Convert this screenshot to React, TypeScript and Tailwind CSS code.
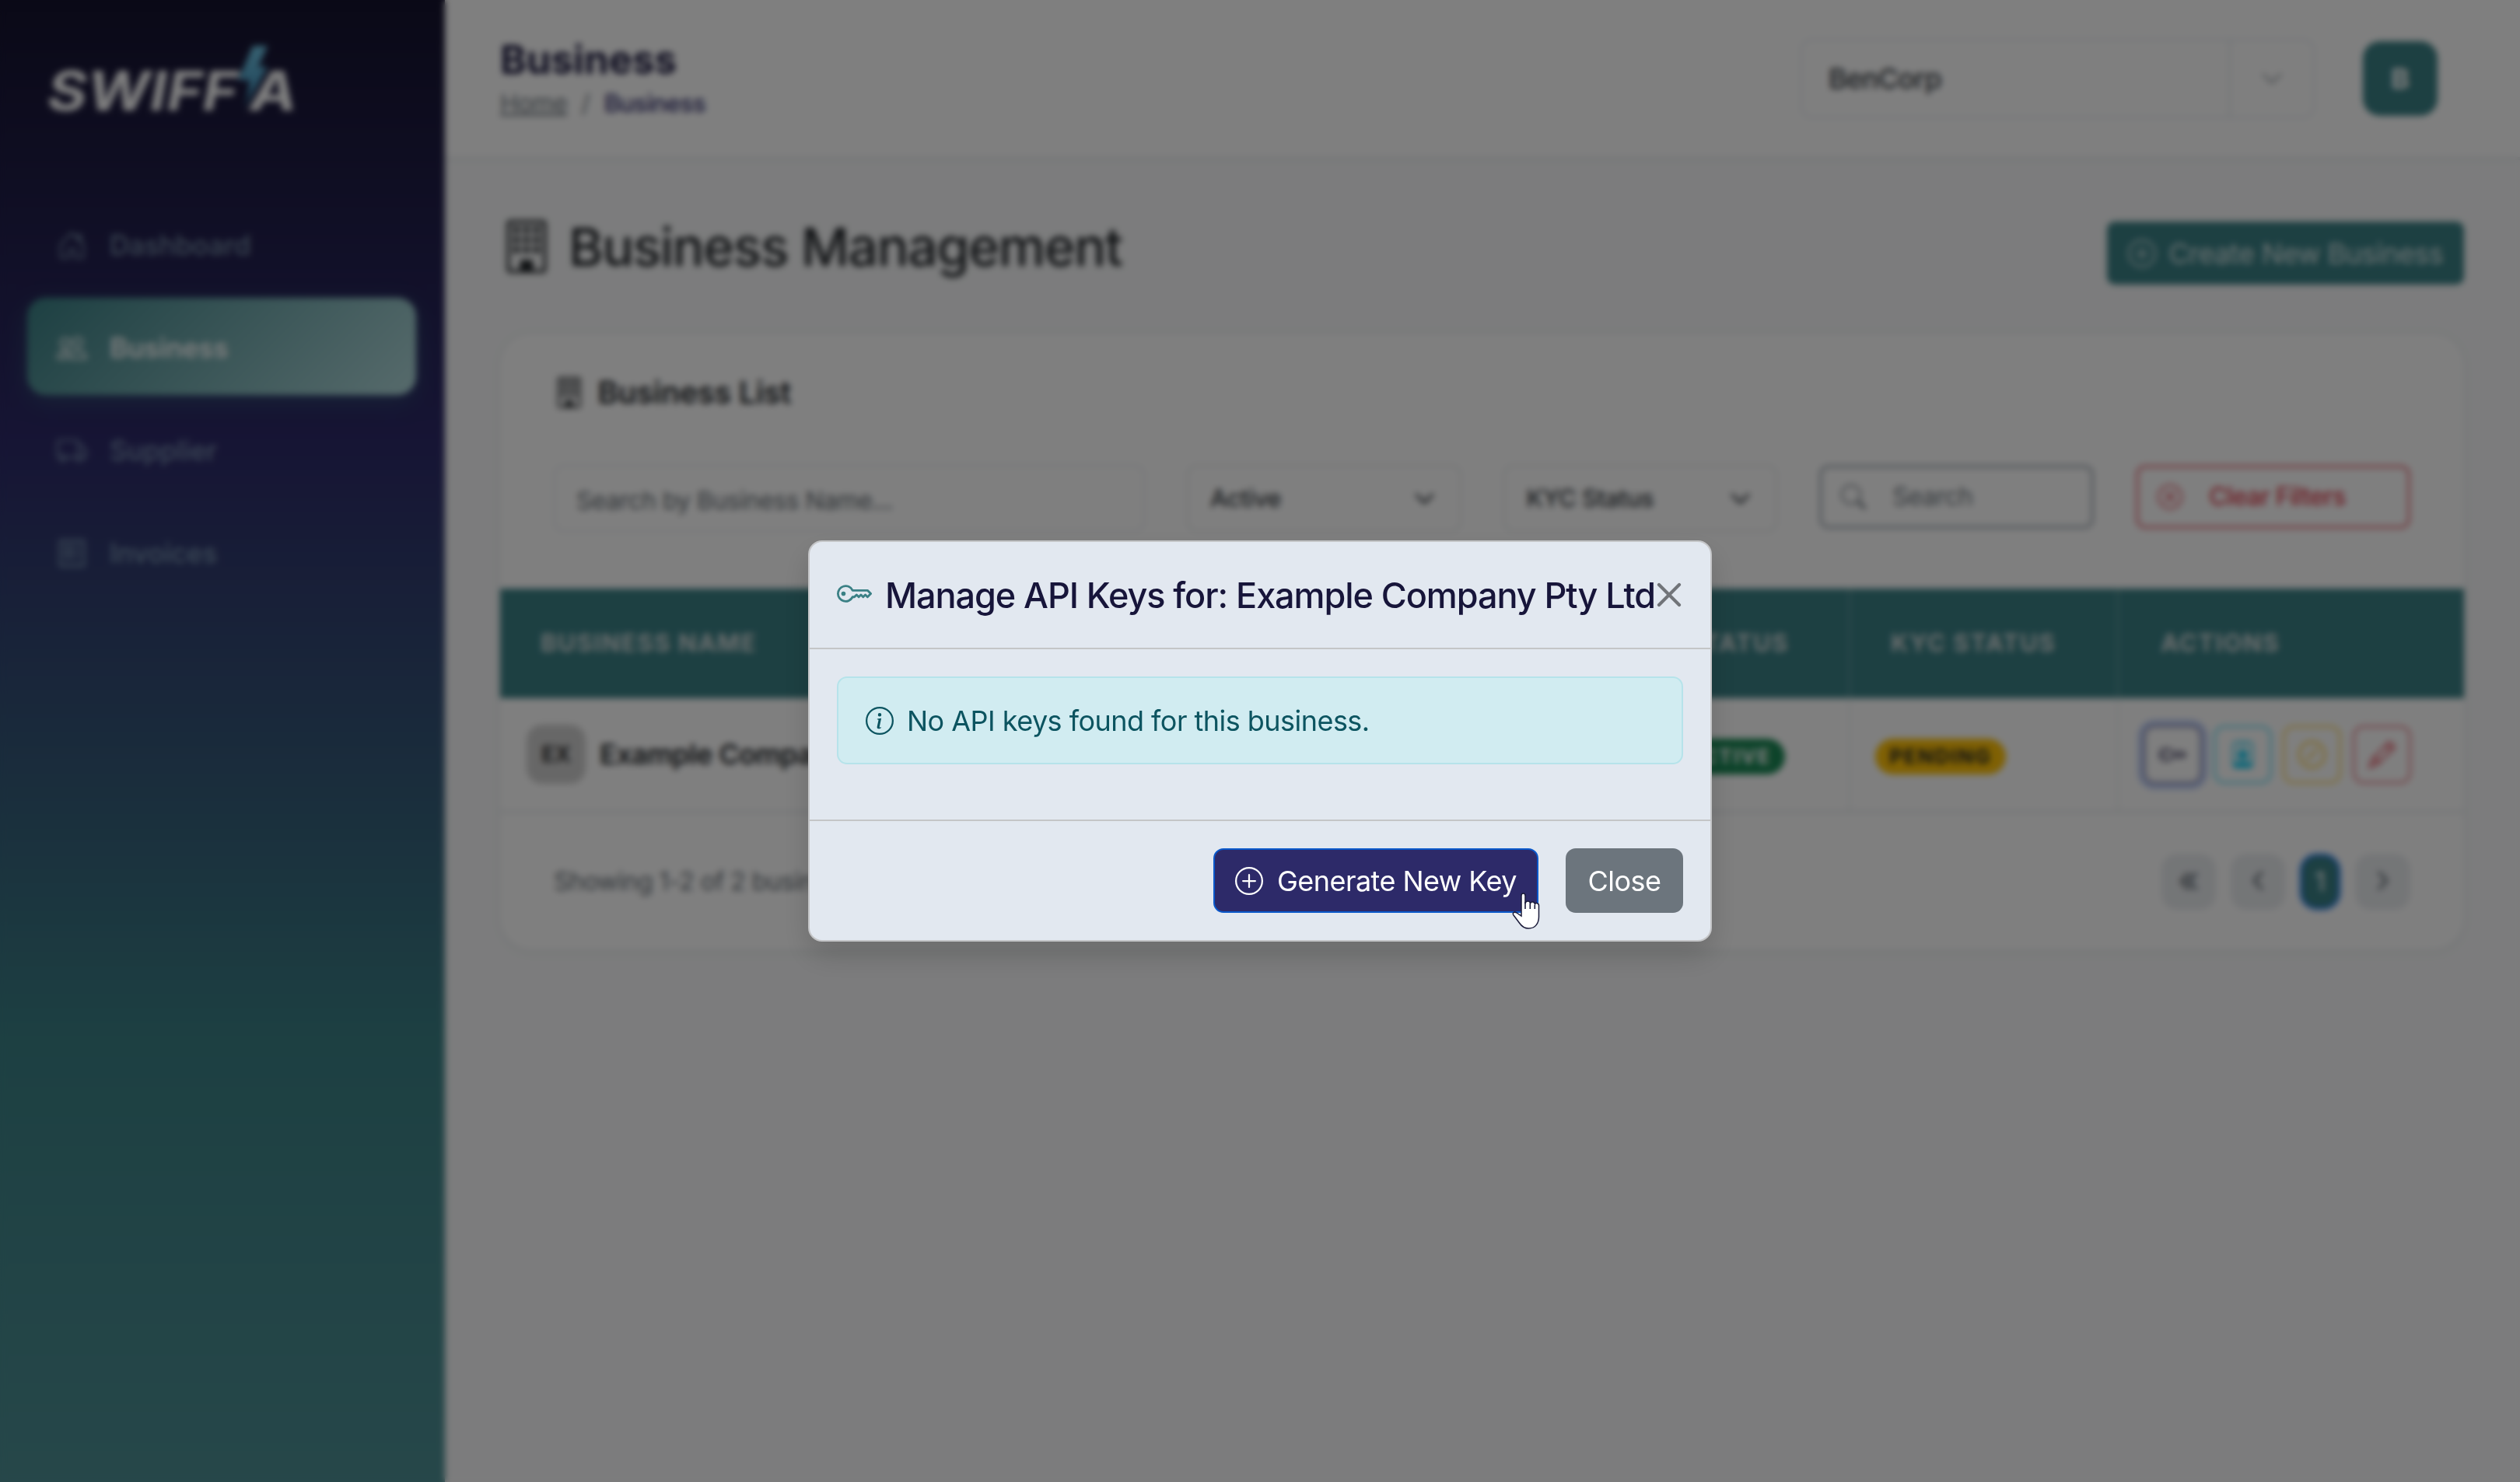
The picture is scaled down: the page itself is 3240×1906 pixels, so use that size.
import type { ReactNode } from "react";
import {
  BsBuilding,
  BsChevronDown,
  BsHouseDoor,
  BsInfoCircle,
  BsKey,
  BsPencil,
  BsPeople,
  BsPersonBadge,
  BsPlusCircle,
  BsReceipt,
  BsSearch,
  BsSlashCircle,
  BsTruck,
  BsXCircle,
} from "react-icons/bs";

function Logo() {
  return (
    <svg className="h-[100px] w-[340px] overflow-visible" viewBox="0 0 340 100" fill="none">
      <defs>
        <linearGradient id="bolt" x1="0" y1="0" x2="0" y2="1">
          <stop offset="0" stopColor="#6fc4e4" />
          <stop offset="0.6" stopColor="#4f9fc6" />
          <stop offset="1" stopColor="#1b3d5c" />
        </linearGradient>
      </defs>
      <text x="3" y="86" fontFamily="Inter" fontWeight="700" fontStyle="italic" fontSize="70" fill="#fff" textLength="245" lengthAdjust="spacingAndGlyphs">SWIFF</text>
      <text x="263" y="86" fontFamily="Inter" fontWeight="700" fontStyle="italic" fontSize="70" fill="#fff" textLength="61" lengthAdjust="spacingAndGlyphs">A</text>
      <path d="M267 3h19l-12 27h12L256 85l7-38h-15z" fill="url(#bolt)" />
    </svg>
  );
}

function NavItem({ icon, label, active }: { icon: ReactNode; label: string; active?: boolean }) {
  return (
    <a
      className={
        "flex h-[125px] items-center gap-[29px] rounded-[24px] pt-[3px] pl-[38px] text-[34.8px] leading-none " +
        (active
          ? "bg-[linear-gradient(135deg,#3a8085,#aed6d8)] font-semibold text-white shadow-[0_8px_30px_rgba(58,128,133,0.35)]"
          : "font-medium text-[#a8cdd8]/65")
      }
    >
      <span className="text-[39px]">{icon}</span>
      {label}
    </a>
  );
}

function Sidebar() {
  return (
    <aside className="flex h-full w-[572px] shrink-0 flex-col bg-[linear-gradient(180deg,#15132e_0%,#2d2a69_30%,#3a8085_70%,#4d8f94_100%)]">
      <div className="h-[251px] pt-[56px] pl-[58px]">
        <Logo />
      </div>
      <nav className="flex flex-col gap-[7px] pr-[37px] pl-[35px]">
        <NavItem icon={<BsHouseDoor />} label="Dashboard" />
        <NavItem icon={<BsPeople />} label="Business" active />
        <NavItem icon={<BsTruck />} label="Supplier" />
        <NavItem icon={<BsReceipt />} label="Invoices" />
      </nav>
    </aside>
  );
}

function TopBar() {
  return (
    <header className="flex h-[206px] shrink-0 items-center justify-between border-b-4 border-[#e9ecef] bg-white pr-[106px] pl-[71px]">
      <div className="flex flex-col pt-[4px]">
        <h2 className="text-[51px] leading-[60px] font-bold text-[#1d1b40]">Business</h2>
        <div className="flex gap-[18px] text-[31.5px] leading-[52px] text-[#6c757d]">
          <span className="tracking-[-0.5px] underline">Home</span>
          <span>/</span>
          <span className="font-medium tracking-[-0.7px] text-[#2d2a69]">Business</span>
        </div>
      </div>
      <div className="flex items-center gap-[62px]">
        <div className="flex h-[102px] w-[661px] items-center rounded-[14px] border-2 border-[#e2e8f0]">
          <span className="flex-1 pl-[34px] text-[36px] font-medium tracking-[-0.9px] text-[#343a40]">BenCorp</span>
          <span className="flex h-full w-[108px] items-center justify-center border-l-2 border-[#dee2e6] text-[30px] text-[#6c757d]">
            <BsChevronDown />
          </span>
        </div>
        <div className="flex size-[96px] items-center justify-center rounded-[22px] bg-[#3a8085] text-[36px] font-bold text-white">B</div>
      </div>
    </header>
  );
}

function Select({ label }: { label: string }) {
  return (
    <div className="col-span-2 flex h-[86px] items-center justify-between rounded-[12px] border-2 border-[#e2e5e8] pr-[32px] pl-[28px] text-[31.5px] font-medium tracking-[-0.6px] text-[#343a40]">
      {label}
      <BsChevronDown className="text-[27px]" strokeWidth={1} />
    </div>
  );
}

function Filters() {
  return (
    <div className="mt-[61px] grid grid-cols-12 gap-[54px]">
      <div className="col-span-4 flex h-[86px] items-center rounded-[12px] border-2 border-[#e6eaee] px-[27px] pt-[6px] text-[31.5px] tracking-[-0.35px] text-[#5f686f]">
        Search by Business Name...
      </div>
      <Select label="Active" />
      <Select label="KYC Status" />
      <button className="col-span-2 flex h-[82px] items-center gap-[34px] rounded-[12px] border-4 border-[#adb5bd] px-[24px] text-[32px] tracking-[-0.5px] text-[#6c757d]">
        <BsSearch />
        Search
      </button>
      <button className="col-span-2 flex h-[82px] items-center gap-[34px] rounded-[12px] border-4 border-[#dc3545]/60 px-[24px] text-[32px] font-medium tracking-[-0.65px] text-[#dc3545]">
        <BsXCircle />
        Clear Filters
      </button>
    </div>
  );
}

const columns = "grid grid-cols-[1473px_263px_345px_1fr]";

function HeadCell({ children, last }: { children?: ReactNode; last?: boolean }) {
  return (
    <div className={"flex items-center " + (last ? "pl-[54px]" : "border-r-2 border-white/25 pl-[52px]")}>{children}</div>
  );
}

function ActionButton({ icon, tone }: { icon: ReactNode; tone: string }) {
  return (
    <button className={"flex size-[75px] items-center justify-center rounded-[14px] border-[3px] text-[35px] " + tone}>
      {icon}
    </button>
  );
}

function Table() {
  return (
    <div>
      <div className={columns + " h-[141px] bg-[#3a8085] text-[31px] font-bold tracking-[1.6px] text-[#d5dcdd]"}>
        <HeadCell>BUSINESS NAME</HeadCell>
        <HeadCell>STATUS</HeadCell>
        <HeadCell>KYC STATUS</HeadCell>
        <HeadCell last>ACTIONS</HeadCell>
      </div>
      <div className={columns + " h-[148px] border-b-4 border-[#eceff1]"}>
        <div className="flex items-center gap-[18px] border-r-2 border-[#e9ecef] pl-[34px]">
          <div className="flex size-[76px] items-center justify-center rounded-[20px] bg-[#cfcfcf] text-[28px] font-bold text-[#333]">EX</div>
          <span className="text-[36px] font-semibold tracking-[-0.55px] text-[#212529]">Example Company Pty Ltd</span>
        </div>
        <div className="flex items-center border-r-2 border-[#e9ecef] pt-[5px] pl-[34px]">
          <span className="flex h-[46px] items-center rounded-full bg-[#198754] px-[18px] text-[26px] font-bold tracking-[2px] text-white">ACTIVE</span>
        </div>
        <div className="flex items-center border-r-2 border-[#e9ecef] pt-[5px] pl-[32px]">
          <span className="flex h-[46px] items-center rounded-full bg-[#ffc107] px-[18px] text-[26px] font-bold tracking-[2px] text-[#212529]">PENDING</span>
        </div>
        <div className="flex items-center gap-[14.6px] pl-[32px]">
          <ActionButton icon={<BsKey />} tone="border-[#2d2a69]/50 text-[#2d2a50] shadow-[0_0_0_7px_rgba(90,130,230,0.42)]" />
          <ActionButton icon={<BsPersonBadge />} tone="border-[#0dcaf0]/60 text-[#0dcaf0]" />
          <ActionButton icon={<BsSlashCircle />} tone="border-[#ffc107]/60 text-[#ffc107]" />
          <ActionButton icon={<BsPencil />} tone="border-[#dc3545]/60 text-[#dc3545]" />
        </div>
      </div>
    </div>
  );
}

function Pager() {
  return (
    <div className="flex gap-[19px] leading-none text-[#6c757d]">
      <span className="flex h-[72px] w-[70px] items-center justify-center rounded-[20px] bg-[#e9ecef] pb-[8px] text-[46px] font-medium">«</span>
      <span className="flex h-[72px] w-[70px] items-center justify-center rounded-[20px] bg-[#e9ecef] pb-[8px] text-[50px]">‹</span>
      <span className="flex h-[72px] w-[52px] items-center justify-center rounded-[22px] border-[3px] border-[#0d6efd] bg-[#3a8085] text-[34px] text-white">1</span>
      <span className="flex h-[72px] w-[71px] items-center justify-center rounded-[20px] bg-[#e9ecef] pb-[8px] text-[50px]">›</span>
    </div>
  );
}

function BusinessPage() {
  return (
    <main className="flex flex-1 flex-col pr-[72px] pl-[71px]">
      <div className="mt-[72px] flex h-[90px] items-center justify-between">
        <h1 className="mt-[-12px] flex items-center gap-[20px] text-[68px] leading-none font-medium tracking-[-1.4px] text-[#212529]">
          <BsBuilding />
          Business Management
        </h1>
        <button className="mt-[5px] flex h-[81px] items-center gap-[16px] rounded-[10px] bg-[#3a8085] px-[27px] text-[36px] tracking-[-0.55px] text-[#dbe8e9]">
          <BsPlusCircle />
          Create New Business
        </button>
      </div>
      <section className="mt-[61px] h-[792px] overflow-hidden rounded-[40px] bg-white shadow-[0_0_0_3px_#eceff1,0_6px_12px_rgba(0,0,0,0.03)]">
        <div className="h-[328px] pt-[44px] pr-[69px] pl-[69px]">
          <h3 className="flex items-center gap-[17px] text-[39.5px] leading-[64px] font-semibold tracking-[-0.2px] text-[#212529]">
            <BsBuilding />
            Business List
          </h3>
          <Filters />
        </div>
        <Table />
        <div className="flex items-center justify-between pt-[52px] pr-[69px] pl-[69px]">
          <span className="text-[32px] tracking-[-0.5px] text-[#636c74]">Showing 1-2 of 2 businesses</span>
          <Pager />
        </div>
      </section>
    </main>
  );
}

function HandCursor() {
  return (
    <svg className="absolute top-[55px] right-[-4px] h-[48px] w-[36px]" viewBox="0 0 36 48">
      <path
        d="M12 30V4c0-4 5-4 5 0v10c1-4 6-4 6.500 0c1-3 5.500-2.500 6 .8c1-2 5-1.500 5 1.700V31c0 9-5 15-13 15c-6 0-9-2.500-12-7L2 29c-2-3 1-5 4-3z"
        fill="#fff"
        stroke="#1b1b3a"
        strokeWidth="1.5"
      />
      <path d="M17 12v9M23.300 14v7M29.300 16v5" stroke="#1b1b3a" strokeWidth="1.600" />
    </svg>
  );
}

function ApiKeysDialog() {
  return (
    <div className="w-[1162px] rounded-[18px] border-2 border-[#c4c5c7] bg-[#e2e8f0] shadow-[0_18px_36px_rgba(0,0,0,0.15)]">
      <div className="flex h-[138px] items-center justify-between border-b-2 border-[#c4c5c7] pr-[37px] pl-[35px]">
        <h5 className="flex items-center gap-[17px] text-[45px] leading-none font-medium tracking-[-1.07px] whitespace-nowrap text-[#17153a]">
          <BsKey className="mt-[-3px] text-[#3a8085]" />
          Manage API Keys for: Example Company Pty Ltd
        </h5>
        <svg className="h-[32px] w-[32px] shrink-0" viewBox="0 0 32 32" stroke="#717479" strokeWidth="4.200" strokeLinecap="round">
          <path d="M3 3l26 26M29 3L3 29" />
        </svg>
      </div>
      <div className="h-[219px] p-[35px]">
        <div className="flex h-[113px] items-center gap-[17px] rounded-[13px] border-2 border-[#b6e3ea] bg-[#d1ecf1] px-[35px] text-[36px] tracking-[-0.53px] text-[#0c5460]">
          <BsInfoCircle />
          No API keys found for this business.
        </div>
      </div>
      <div className="flex h-[155px] items-center justify-end gap-[35px] border-t-2 border-[#c4c5c7] px-[35px]">
        <button className="relative flex h-[83px] w-[418px] items-center gap-[18px] rounded-[13px] border-2 border-[#0a58ca] bg-[#2d2a69] pl-[26px] text-[36px] tracking-[-0.55px] whitespace-nowrap text-white">
          <BsPlusCircle />
          Generate New Key
          <HandCursor />
        </button>
        <button className="h-[83px] w-[151px] rounded-[13px] bg-[#6c757d] text-[36px] tracking-[-0.5px] text-white">Close</button>
      </div>
    </div>
  );
}

export default function App() {
  return (
    <div className="relative h-[1906px] w-full overflow-hidden bg-[#f8f9fa] font-['Inter',sans-serif]">
      <div className="flex h-full">
        <Sidebar />
        <div className="flex flex-1 flex-col">
          <TopBar />
          <BusinessPage />
        </div>
      </div>
      <div className="absolute inset-0 flex items-center justify-center bg-black/50 backdrop-blur-[4px]">
        <ApiKeysDialog />
      </div>
    </div>
  );
}
